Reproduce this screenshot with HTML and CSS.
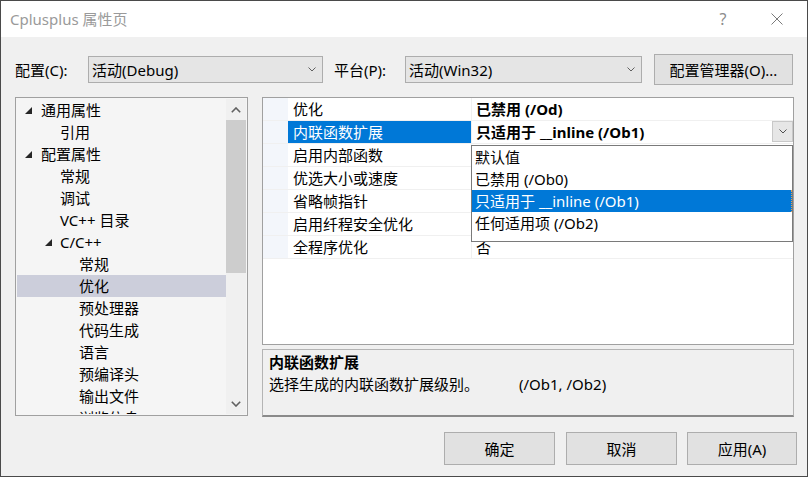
FILE: index.html
```html
<!DOCTYPE html>
<html lang="zh-CN">
<head>
<meta charset="utf-8">
<title>Cplusplus 属性页</title>
<link rel="stylesheet" href="styles.css">
</head>
<body>
<div class="window">
  <div class="titlebar">
    <span class="title">Cplusplus 属性页</span>
    <span class="help">?</span>
    <svg class="close" width="12" height="12" viewBox="0 0 12 12"><path d="M0.5 0.5 L11.5 11.5 M11.5 0.5 L0.5 11.5" stroke="#7a7a7a" stroke-width="1" fill="none"/></svg>
  </div>
  <div class="body">
    <div class="config-row">
      <span class="lbl lbl-config">配置(C):</span>
      <div class="combo combo-config">
        <span>活动(Debug)</span>
        <svg class="chev" width="8" height="5" viewBox="0 0 8 5"><path d="M0.5 0.5 L4 4 L7.5 0.5" stroke="#606060" stroke-width="1" fill="none"/></svg>
      </div>
      <span class="lbl lbl-platform">平台(P):</span>
      <div class="combo combo-platform">
        <span>活动(Win32)</span>
        <svg class="chev" width="8" height="5" viewBox="0 0 8 5"><path d="M0.5 0.5 L4 4 L7.5 0.5" stroke="#606060" stroke-width="1" fill="none"/></svg>
      </div>
      <button class="btn btn-mgr">配置管理器(O)...</button>
    </div>

    <div class="main">
      <div class="tree">
        <div class="tree-list">
          <div class="node l1"><span class="tw"><svg width="7" height="7" viewBox="0 0 7 7"><polygon points="7,0 7,7 0,7" fill="#262626"/></svg></span>通用属性</div>
          <div class="node l2"><span class="tw"></span>引用</div>
          <div class="node l1"><span class="tw"><svg width="7" height="7" viewBox="0 0 7 7"><polygon points="7,0 7,7 0,7" fill="#262626"/></svg></span>配置属性</div>
          <div class="node l2"><span class="tw"></span>常规</div>
          <div class="node l2"><span class="tw"></span>调试</div>
          <div class="node l2"><span class="tw"></span>VC++ 目录</div>
          <div class="node l2"><span class="tw tw2"><svg width="7" height="7" viewBox="0 0 7 7"><polygon points="7,0 7,7 0,7" fill="#262626"/></svg></span>C/C++</div>
          <div class="node l3"><span class="tw"></span>常规</div>
          <div class="node l3 sel"><span class="tw"></span>优化</div>
          <div class="node l3"><span class="tw"></span>预处理器</div>
          <div class="node l3"><span class="tw"></span>代码生成</div>
          <div class="node l3"><span class="tw"></span>语言</div>
          <div class="node l3"><span class="tw"></span>预编译头</div>
          <div class="node l3"><span class="tw"></span>输出文件</div>
          <div class="node l3"><span class="tw"></span>浏览信息</div>
        </div>
        <div class="vscroll">
          <div class="sb-btn"><svg width="10" height="6" viewBox="0 0 10 6"><path d="M0.8 5.2 L5 1 L9.2 5.2" stroke="#606060" stroke-width="1.6" fill="none"/></svg></div>
          <div class="sb-thumb"></div>
          <div class="sb-track"></div>
          <div class="sb-btn"><svg width="10" height="6" viewBox="0 0 10 6"><path d="M0.8 0.8 L5 5 L9.2 0.8" stroke="#606060" stroke-width="1.6" fill="none"/></svg></div>
        </div>
      </div>

      <div class="right">
        <div class="grid">
          <div class="prow">
            <div class="gutter"></div>
            <div class="pname">优化</div>
            <div class="pval bold">已禁用 (/Od)</div>
          </div>
          <div class="prow">
            <div class="gutter"></div>
            <div class="pname psel">内联函数扩展</div>
            <div class="pval bold"><span class="pval-text">只适用于 __inline (/Ob1)</span>
              <span class="vbtn"><svg width="8" height="5" viewBox="0 0 8 5"><path d="M0.5 0.5 L4 4 L7.5 0.5" stroke="#505050" stroke-width="1" fill="none"/></svg></span>
            </div>
          </div>
          <div class="prow">
            <div class="gutter"></div>
            <div class="pname">启用内部函数</div>
            <div class="pval"></div>
          </div>
          <div class="prow">
            <div class="gutter"></div>
            <div class="pname">优选大小或速度</div>
            <div class="pval"></div>
          </div>
          <div class="prow">
            <div class="gutter"></div>
            <div class="pname">省略帧指针</div>
            <div class="pval"></div>
          </div>
          <div class="prow">
            <div class="gutter"></div>
            <div class="pname">启用纤程安全优化</div>
            <div class="pval"></div>
          </div>
          <div class="prow">
            <div class="gutter"></div>
            <div class="pname">全程序优化</div>
            <div class="pval">否</div>
          </div>

          <div class="dropdown">
            <div class="ditem">默认值</div>
            <div class="ditem">已禁用 (/Ob0)</div>
            <div class="ditem dsel">只适用于 __inline (/Ob1)</div>
            <div class="ditem">任何适用项 (/Ob2)</div>
          </div>
        </div>
        <div class="desc">
          <div class="desc-title">内联函数扩展</div>
          <div class="desc-text">选择生成的内联函数扩展级别。<span class="desc-flags">(/Ob1, /Ob2)</span></div>
        </div>
      </div>
    </div>

    <div class="buttons">
      <button class="btn btn-dlg btn-ok">确定</button>
      <button class="btn btn-dlg btn-cancel">取消</button>
      <button class="btn btn-dlg btn-apply">应用(A)</button>
    </div>
  </div>
</div>
</body>
</html>
```

FILE: styles.css
```css
* { box-sizing: border-box; }
html, body { margin: 0; padding: 0; }
body {
  font-family: "Noto Sans", "Noto Sans CJK SC", sans-serif;
  font-size: 15px;
  color: #000;
  background: #ffffff;
}

.window {
  width: 808px;
  height: 477px;
  border: 1px solid #4a4a4a;
  background: #f0f0f0;
  display: flex;
  flex-direction: column;
  overflow: hidden;
}

/* title bar */
.titlebar {
  height: 36px;
  flex-shrink: 0;
  background: #ffffff;
  display: flex;
  align-items: center;
}
.title {
  margin-left: 9px;
  color: #9a9a9a;
  font-size: 15px;
  line-height: 20px;
}
.help {
  margin-left: auto;
  width: 8px;
  text-align: center;
  color: #8c8c8c;
  font-size: 16px;
  line-height: 20px;
}
.close {
  margin-left: 44px;
  margin-right: 24px;
}

/* body */
.body {
  flex: 1;
  padding: 17px 10px 0 14px;
  display: flex;
  flex-direction: column;
}

.config-row {
  display: flex;
  align-items: center;
  height: 31px;
}
.lbl { line-height: 20px; white-space: nowrap; }
.lbl-config { width: 73px; }
.lbl-platform { width: 71px; margin-left: 11px; }

.combo {
  height: 27px;
  background: #e5e5e5;
  border: 1px solid #adadad;
  display: flex;
  align-items: center;
  justify-content: space-between;
  padding: 0 6px 0 3px;
  line-height: 20px;
}
.combo-config { width: 235px; }
.combo-platform { width: 237px; }

.btn {
  font: inherit;
  color: #000;
  background: #e1e1e1;
  border: 1px solid #adadad;
  padding: 0;
  margin: 0;
  line-height: 20px;
}
.btn-mgr {
  margin-left: 12px;
  width: 139px;
  height: 31px;
}

/* main area */
.main {
  display: flex;
  gap: 14px;
  margin-top: 12px;
  height: 320px;
}

.tree {
  width: 233px;
  height: 319px;
  border: 1px solid #a0a0a0;
  background: #f5f5f5;
  padding: 1px;
  display: flex;
  overflow: hidden;
}
.tree-list {
  flex: 1;
  overflow: hidden;
}
.node {
  height: 22px;
  line-height: 22px;
  display: flex;
  align-items: center;
  white-space: nowrap;
}
.node.sel { background: #cccedb; }
.l1 { padding-left: 8px; }
.l2 { padding-left: 27px; }
.l3 { padding-left: 46px; }
.tw {
  width: 16px;
  flex-shrink: 0;
  display: flex;
  align-items: center;
}
.tw2 svg { margin-left: 1px; }

.vscroll {
  width: 20px;
  flex-shrink: 0;
  display: flex;
  flex-direction: column;
  background: #f0f0f0;
}
.sb-btn {
  height: 21px;
  flex-shrink: 0;
  display: flex;
  align-items: center;
  justify-content: center;
}
.sb-thumb {
  height: 153px;
  flex-shrink: 0;
  background: #cdcdcd;
}
.sb-track { flex: 1; }

/* right column */
.right {
  width: 532px;
  display: flex;
  flex-direction: column;
  gap: 4px;
}

.grid {
  height: 248px;
  border: 1px solid #a0a0a0;
  background: #ffffff;
  position: relative;
}
.prow {
  display: flex;
  height: 23px;
  border-bottom: 1px solid #f0f0f0;
  line-height: 22px;
}
.gutter {
  width: 25px;
  flex-shrink: 0;
  background: #f3f6fb;
}
.pname {
  width: 184px;
  flex-shrink: 0;
  padding-left: 5px;
  border-right: 1px solid #f0f0f0;
  white-space: nowrap;
}
.pname.psel {
  background: #0078d7;
  color: #ffffff;
}
.pval {
  flex: 1;
  padding-left: 4px;
  display: flex;
  align-items: flex-start;
  white-space: nowrap;
}
.pval-text { flex: 1; }
.bold { font-weight: bold; }
.vbtn {
  width: 21px;
  height: 21px;
  background: #e6e6e6;
  border: 1px solid #c8c8c8;
  display: flex;
  align-items: center;
  justify-content: center;
}

.dropdown {
  position: absolute;
  left: 208px;
  top: 47px;
  width: 322px;
  height: 97px;
  background: #ffffff;
  border: 1px solid #7a7a7a;
  padding-bottom: 7px;
}
.ditem {
  height: 22px;
  line-height: 22px;
  padding-left: 3px;
  white-space: nowrap;
}
.ditem.dsel {
  background: #0078d7;
  color: #ffffff;
  border-right: 1px dotted #e8a050;
}

.desc {
  height: 68px;
  border: 1px solid #b4b4b4;
  border-bottom: 2px solid #8a8a8a;
  background: #f0f0f0;
  padding: 1px 6px 0;
}
.desc-title {
  font-weight: bold;
  line-height: 22px;
}
.desc-text {
  line-height: 22px;
  white-space: nowrap;
}
.desc-flags { margin-left: 40px; }

/* dialog buttons */
.buttons {
  display: flex;
  justify-content: flex-end;
  margin-top: 15px;
}
.btn-dlg {
  width: 111px;
  height: 33px;
}
.btn-ok { margin-right: 11px; }
.btn-cancel { margin-right: 10px; }
.btn-apply { width: 110px; }
```
